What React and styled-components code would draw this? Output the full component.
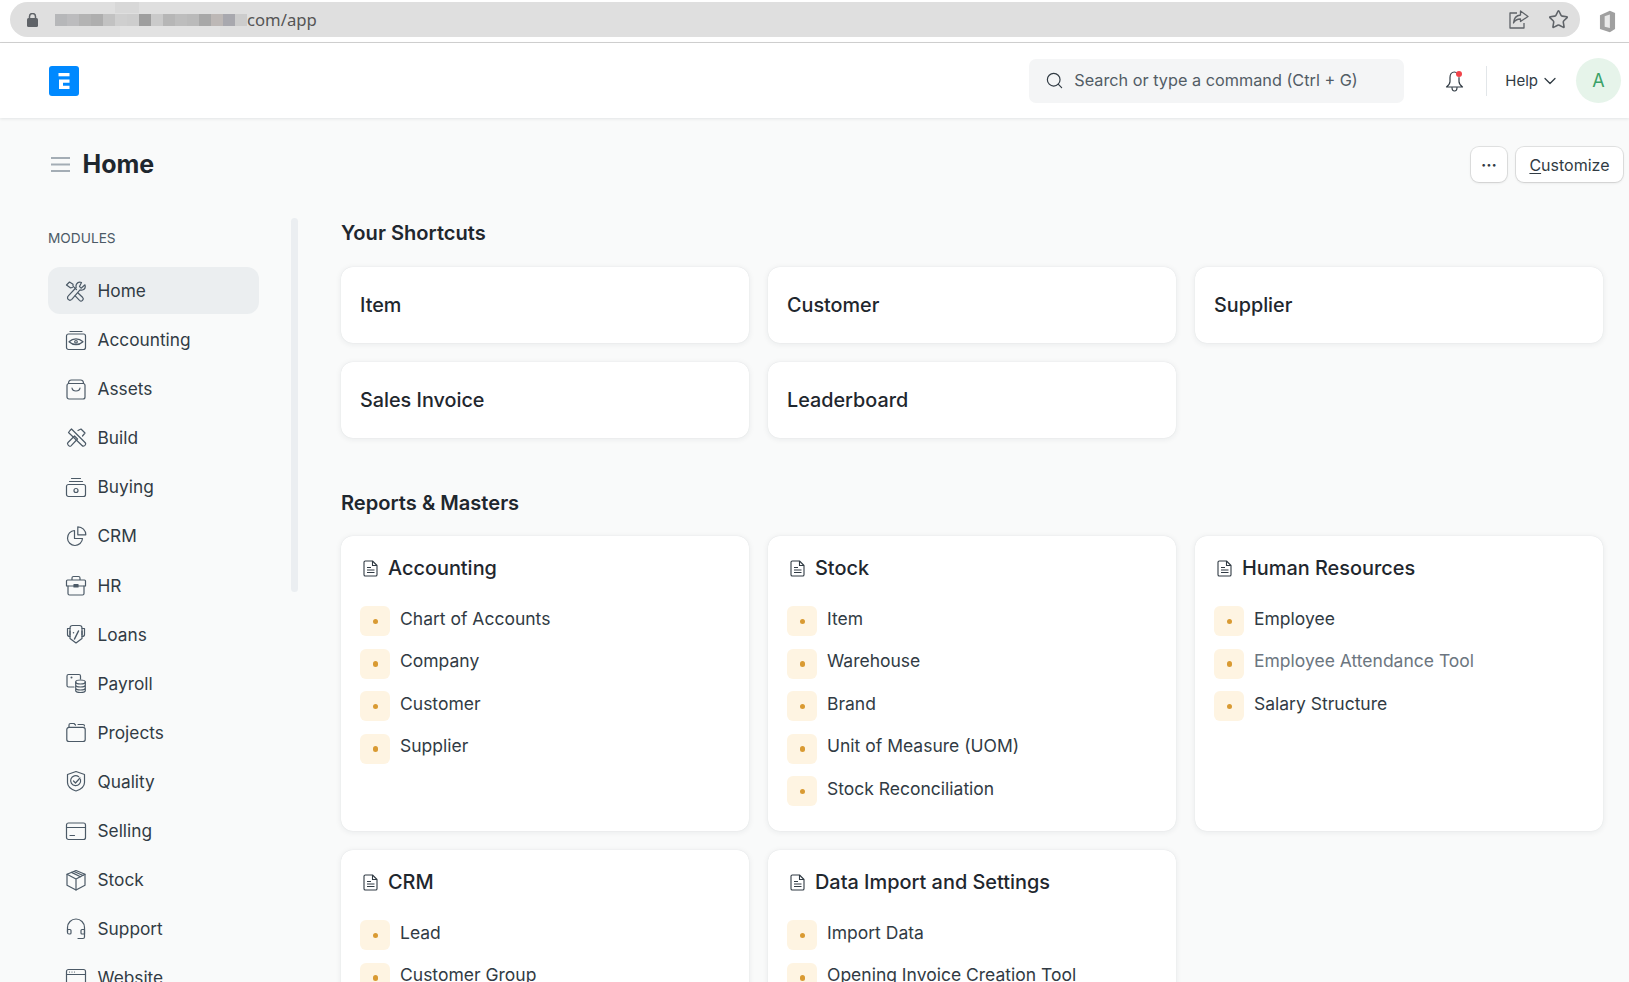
import React from 'react';
import styled, { createGlobalStyle } from 'styled-components';
import { ChevronDown, Search, Star } from 'lucide-react';

const GlobalStyle = createGlobalStyle`
  html, body {
    margin: 0;
    padding: 0;
    height: 982px;
    overflow: hidden;
    background: #f9fafa;
  }
  * {
    box-sizing: border-box;
  }
`;

const Page = styled.div`
  height: 982px;
  overflow: hidden;
  font-family: Inter, "Liberation Sans", sans-serif;
  color: #1f272e;
`;

// browser chrome
const BrowserBar = styled.div`
  height: 43px;
  background: #fff;
  border-bottom: 1px solid #d2d2d2;
  padding: 2px 13px 0 10px;
  display: flex;
  align-items: flex-start;
`;

const UrlPill = styled.div`
  position: relative;
  flex: 1;
  height: 35px;
  background: #dfdfdf;
  border-radius: 18px;
  display: flex;
  align-items: center;
  padding: 0 11px 0 17px;
  margin-right: 19px;
`;

const Mosaic = styled.div`
  display: flex;
  margin-left: 17px;
`;

const MosaicCell = styled.span`
  width: 12px;
  height: 12px;
  background: ${(p) => p.$shade};
`;

const Smudge = styled.span`
  position: absolute;
  left: ${(p) => p.$left}px;
  top: ${(p) => p.$top}px;
  width: ${(p) => p.$width}px;
  height: ${(p) => p.$height}px;
  background: ${(p) => p.$shade};
`;

const UrlText = styled.span`
  font-family: "Noto Sans", "Open Sans", sans-serif;
  font-size: 16.7px;
  color: #555;
  margin-bottom: 1px;
`;

const PillActions = styled.div`
  margin-left: auto;
  display: flex;
  align-items: center;
  gap: 19px;
  color: #5f6368;
`;

// navbar
const Navbar = styled.header`
  height: 75px;
  background: #fff;
  box-shadow: 0 1px 3px rgba(25, 39, 52, 0.1);
  display: flex;
  align-items: center;
  padding: 0 8px 0 49px;
  position: relative;
`;

const SearchBox = styled.div`
  width: 375px;
  height: 44px;
  margin-left: auto;
  background: #f4f5f6;
  border-radius: 7px;
  display: flex;
  align-items: center;
  padding-left: 16px;
  gap: 10px;
  color: #525c65;
  font-size: 16.25px;
  span {
    margin-bottom: 2px;
  }
`;

const BellWrap = styled.div`
  margin-left: 40px;
  width: 21px;
  height: 22px;
  position: relative;
`;

const BellDot = styled.span`
  position: absolute;
  top: 1px;
  right: 3px;
  width: 6px;
  height: 6px;
  border-radius: 50%;
  background: #f1434a;
`;

const NavDivider = styled.div`
  width: 1px;
  height: 30px;
  background: #e2e6e9;
  margin: 0 18px 0 21px;
`;

const HelpButton = styled.div`
  display: flex;
  align-items: center;
  gap: 2px;
  font-size: 15px;
  color: #313b44;
`;

const Avatar = styled.div`
  width: 45px;
  height: 45px;
  margin-left: 16px;
  border-radius: 50%;
  background: #e6f4ea;
  color: #3aa168;
  display: flex;
  align-items: center;
  justify-content: center;
  font-size: 18px;
`;

// page head
const PageHead = styled.div`
  height: 92px;
  display: flex;
  align-items: center;
  padding: 0 6px 0 51px;
`;

const PageTitle = styled.h1`
  margin: 0 0 0 12.5px;
  font-size: 25px;
  font-weight: 700;
  color: #1f272e;
`;

const HeadActions = styled.div`
  margin-left: auto;
  display: flex;
  gap: 9px;
`;

const HeadButton = styled.button`
  height: 35px;
  padding: ${(p) => (p.$square ? '2px 0 0' : '2px 13.5px 0')};
  width: ${(p) => (p.$square ? '36px' : 'auto')};
  background: #fff;
  border: 0;
  border-radius: 8px;
  box-shadow: 0 0 0 1px rgba(0, 0, 0, 0.09), 0 1px 3px rgba(0, 0, 0, 0.1);
  font-family: inherit;
  font-size: 16px;
  font-weight: ${(p) => (p.$square ? 700 : 400)};
  color: #313b44;
  u {
    text-underline-offset: 2px;
  }
`;

// body
const Body = styled.div`
  display: flex;
  align-items: flex-start;
  padding: 8px 0 0 48px;
`;

const Sidebar = styled.nav`
  width: 211px;
  flex-shrink: 0;
`;

const SideLabel = styled.div`
  padding-top: 10px;
  height: 49px;
  line-height: 20px;
  font-size: 13.7px;
  color: #4c5a67;
`;

const SideList = styled.div`
  display: flex;
  flex-direction: column;
  gap: 2.1px;
`;

const SideItem = styled.div`
  height: 47px;
  display: flex;
  align-items: center;
  gap: 10.5px;
  padding-left: 17px;
  border-radius: 12px;
  font-size: 17.3px;
  color: #313b44;
  background: ${(p) => (p.$active ? '#ebeef0' : 'transparent')};
`;

const ScrollThumb = styled.div`
  width: 7px;
  height: 374px;
  margin: 0 43px 0 32px;
  flex-shrink: 0;
  border-radius: 4px;
  background: #ebeef1;
`;

const Main = styled.main`
  width: 1262px;
  flex-shrink: 0;
`;

const SectionTitle = styled.h2`
  margin: ${(p) => (p.$first ? '0 0 19px' : '50px 0 18px')};
  height: 30px;
  line-height: 30px;
  font-size: 20.1px;
  font-weight: 600;
  color: #1f272e;
`;

const CardGrid = styled.div`
  display: grid;
  grid-template-columns: repeat(3, 408px);
  gap: 19px;
`;

const ShortcutCard = styled.div`
  height: 76px;
  background: #fff;
  border-radius: 12px;
  box-shadow: 0 0 1px rgba(25, 39, 52, 0.12), 0 1px 6px rgba(25, 39, 52, 0.08);
  display: flex;
  align-items: center;
  padding: 0 0 1px 19px;
  font-size: 19.8px;
  font-weight: 500;
  color: #1f272e;
`;

const LinkCard = styled.div`
  background: #fff;
  border-radius: 12px;
  box-shadow: 0 0 1px rgba(25, 39, 52, 0.12), 0 1px 6px rgba(25, 39, 52, 0.08);
  padding: 20px 19px 25px;
`;

const CardTitle = styled.div`
  height: 24px;
  line-height: 24px;
  margin-bottom: 26px;
  display: flex;
  align-items: center;
  gap: 10px;
  padding-left: 3px;
  font-size: 19.9px;
  font-weight: 500;
`;

const LinkList = styled.div`
  display: flex;
  flex-direction: column;
  gap: 12.5px;
`;

const LinkRow = styled.div`
  height: 30px;
  display: flex;
  align-items: center;
  gap: 10px;
`;

const DotBox = styled.span`
  width: 30px;
  height: 30px;
  border-radius: 6px;
  background: #fef4e2;
  display: flex;
  align-items: center;
  justify-content: center;
  &::after {
    content: '';
    width: 5.500px;
    height: 5.500px;
    border-radius: 50%;
    background: #d99a32;
    margin-left: 1px;
    margin-top: 1px;
  }
`;

const LinkLabel = styled.span`
  font-size: 17.5px;
  margin-bottom: 6px;
  color: ${(p) => (p.$muted ? '#6c7680' : '#313b44')};
`;

// icons, all on a 22 grid
const Svg = ({ size = 22, children }) => (
  <svg width={size} height={size} viewBox="0 0 22 22" fill="none" stroke="#4c5a67" strokeWidth="1.2" strokeLinecap="round" strokeLinejoin="round">
    {children}
  </svg>
);

const sideIcons = {
  Home: (
    <>
      <path d="M14.500 6.600l1.600 1.600 3.900-3.400c.6 2.100-.1 4.100-1.900 5-1 .5-2.100.4-3.100.1L6.800 19.300c-1 1-2.700 1-3.600.1s-.9-2.600.1-3.600l7.900-8.300c-.4-1.200-.3-2.400.3-3.400 1-1.600 3-2.300 5-1.600z" />
      <path d="M1.500 5l3-3 3.500 2.200v2l3.500 3.500M13 13l4.500 4.300c.8.8.8 2.200 0 3s-2.200.8-3 0l-4.300-4.500M7.500 7.500l-2.200.3L1.500 5" />
    </>
  ),
  Accounting: (
    <>
      <path d="M5 2.500h12" />
      <rect x="1.500" y="5" width="19" height="15.500" rx="2" />
      <path d="M4 12.800c4-3.800 10-3.800 14 0-4 3.800-10 3.800-14 0z" />
      <circle cx="11" cy="12.800" r="1.300" />
    </>
  ),
  Assets: (
    <>
      <rect x="2" y="5.500" width="18" height="15.500" rx="2" />
      <path d="M3.500 5.500c0-2 1-3.500 3-3.500h9c2 0 3 1.500 3 3.500" />
      <path d="M7 10c.5 4 7.500 4 8 0" />
    </>
  ),
  Build: (
    <>
      <path d="M3 15.500l6.500-6.500 3 3-6.500 6.800c-.6.600-1.400.600-2 0l-1-1c-.6-.6-.6-1.600 0-2.300z" />
      <path d="M5 3.500l1.500-1.500 13.500 13.500c.8.800.8 1.800.1 2.600l-.5.500c-.8.700-1.800.7-2.600-.1L3.500 5.500l1.500-2z" />
      <path d="M13 3.500l3-1.500 4 4-2.500 3" />
    </>
  ),
  Buying: (
    <>
      <path d="M6.500 2.500h9M4.500 5.500h13" />
      <rect x="1.500" y="8.500" width="19" height="12" rx="2" />
      <circle cx="11" cy="14.500" r="2" />
    </>
  ),
  CRM: (
    <>
      <path d="M9.500 5.500a7.500 7.500 0 1 0 8 8h-8z" />
      <path d="M12.800 1.800v8h8a8 8 0 0 0-8-8z" />
    </>
  ),
  HR: (
    <>
      <path d="M3 12v7.500c0 1 .5 1.500 1.500 1.500h13c1 0 1.500-.5 1.500-1.500V12" />
      <path d="M1.500 7c0-.7.300-1 1-1h17c.7 0 1 .3 1 1v5h-19zM7 5.500V4C7 3 7.500 2.500 8.500 2.500h5c1 0 1.500.5 1.500 1.500v1.500" />
      <path d="M9 10.500h4v2.500h-4z" fill="#4c5a67" />
    </>
  ),
  Loans: (
    <>
      <path d="M5 12V5c0-1.500 1-2.500 2.500-2.500h7C16 2.500 17 3.500 17 5v7" />
      <path d="M5 5.500H2.500v6c0 1.500 1 2 2.500 2M17 5.500h2.500v6c0 1.500-1 2-2.500 2" />
      <path d="M5 8v7.500L11 20l6-4.500V8" />
      <path d="M13.500 8l-4 8M8.500 9.800h.01" strokeWidth="1.500" />
    </>
  ),
  Payroll: (
    <>
      <path d="M9 15H3.500C2.500 15 2 14.500 2 13.500V4c0-1 .5-1.500 1.500-1.500H14c1 0 1.500.5 1.500 1.500v3" />
      <path d="M6.500 5.500h.01" strokeWidth="2" />
      <ellipse cx="15.500" cy="10" rx="4.800" ry="2" />
      <path d="M10.700 10v8.500c0 1 2 2 4.800 2s4.800-1 4.800-2V10M10.700 13c0 1.100 2 2 4.800 2s4.800-.9 4.800-2M10.700 16c0 1.100 2 2 4.800 2s4.800-.9 4.800-2" />
    </>
  ),
  Projects: (
    <>
      <path d="M4 6.500V4c0-1 .5-1.500 1.500-1.500H9l1.500 1.500" />
      <path d="M13 3.500h5c1 0 1.500.5 1.500 1.500" />
      <path d="M1.800 8.500c0-1.500 1-2.200 2.200-2.200h14c1.300 0 2.200.7 2.200 2.200v10c0 1.500-.9 2-2.200 2H4c-1.300 0-2.200-.5-2.200-2z" />
    </>
  ),
  Quality: (
    <>
      <path d="M11 1.500l8.500 3v8c0 4-4 7-8.500 8.500-4.500-1.500-8.500-4.500-8.500-8.500v-8z" />
      <path d="M15.500 9.500a5 5 0 1 1-1.800-2.800" />
      <path d="M8.500 11l2 2 4.500-5" />
    </>
  ),
  Selling: (
    <>
      <rect x="1.500" y="3" width="19" height="16.500" rx="2" />
      <path d="M1.500 7.500h19M5 15.500h4.500" />
    </>
  ),
  Stock: (
    <>
      <path d="M11 1.500l9 3.800v11L11 21l-9-4.700v-11z" />
      <path d="M2 5.300L11 10l9-4.700M11 10v11" />
      <path d="M6.500 3.400l9 4.300M9 2.500l9 4" />
    </>
  ),
  Support: (
    <>
      <path d="M2.500 14V9.500a8.500 8.500 0 0 1 17 0V14" />
      <path d="M2.500 11.500H5c.7 0 1 .3 1 1V15c0 .7-.3 1-1 1H4c-1 0-1.500-.5-1.500-1.500zM19.500 11.500H17c-.7 0-1 .3-1 1V15c0 .7.3 1 1 1h2.500z" />
      <path d="M19.500 14v5c0 1-.5 1.500-1.500 1.500h-5" />
    </>
  ),
  Website: (
    <>
      <rect x="1.500" y="2.500" width="19" height="17" rx="2" />
      <path d="M1.500 7.500h19M4.500 5h.01M7 5h.01M9.500 5h.01" />
    </>
  ),
};

const DocIcon = () => (
  <svg width="15" height="17" viewBox="0 0 15 17" fill="none" stroke="#313b44" strokeWidth="1.1" strokeLinejoin="round">
    <path d="M1 2.300C1 1.500 1.500 1 2.300 1H9.500L14 5.500v9.200c0 .8-.5 1.300-1.300 1.300H2.300c-.8 0-1.300-.5-1.300-1.300z" />
    <path d="M9.500 1v4.500H14M4 7.500h4M4 10h7.500M4 12.500h7.500" />
  </svg>
);

const Logo = () => (
  <svg width="30" height="30" viewBox="0 0 30 30">
    <rect width="30" height="30" rx="3" fill="#0089ff" />
    <path d="M9.500 7h11v3.300h-11z" fill="#fff" />
    <path d="M10 13.500h10.500v3.200H14v3.100h6.500V23H10z" fill="#fff" />
  </svg>
);

const mosaic = ['#b6b7b9', '#bcbcbe', '#b3b3b3', '#aeaeae', '#c2c2c2', '#cfcfcf', '#cdcdcd', '#9e9e9e', '#cacaca', '#b6b6b6', '#bdbdbd', '#bababa', '#a8a8a8', '#bdb8b6', '#a8a8ae', '#cccccc'];

const modules = ['Home', 'Accounting', 'Assets', 'Build', 'Buying', 'CRM', 'HR', 'Loans', 'Payroll', 'Projects', 'Quality', 'Selling', 'Stock', 'Support', 'Website'];

const shortcuts = ['Item', 'Customer', 'Supplier', 'Sales Invoice', 'Leaderboard'];

const reports = [
  { title: 'Accounting', links: ['Chart of Accounts', 'Company', 'Customer', 'Supplier'] },
  { title: 'Stock', links: ['Item', 'Warehouse', 'Brand', 'Unit of Measure (UOM)', 'Stock Reconciliation'] },
  { title: 'Human Resources', links: ['Employee', 'Employee Attendance Tool', 'Salary Structure'] },
  { title: 'CRM', links: ['Lead', 'Customer Group'] },
  { title: 'Data Import and Settings', links: ['Import Data', 'Opening Invoice Creation Tool'] },
];

const App = () => {
  return (
    <Page>
      <GlobalStyle />
      <BrowserBar>
        <UrlPill>
          <svg width="11" height="14" viewBox="0 0 11 14">
            <path d="M2.500 5V3.500a3 3 0 0 1 6 0V5" fill="none" stroke="#5f6368" strokeWidth="1.500" />
            <rect y="5" width="11" height="9" rx="1.500" fill="#5f6368" />
          </svg>
          <Mosaic>
            {mosaic.map((shade, i) => <MosaicCell key={i} $shade={shade} />)}
          </Mosaic>
          <Smudge $left={105} $top={0} $width={24} $height={11} $shade="#d8d8d8" />
          <Smudge $left={110} $top={24} $width={100} $height={11} $shade="#e2e2e2" />
          <UrlText>com/app</UrlText>
          <PillActions>
            <svg width="20" height="19" viewBox="0 0 20 19" fill="none" stroke="#5f6368" strokeWidth="1.300" strokeLinejoin="round">
              <path d="M8 3H1v15h14v-5" />
              <path d="M11.500 1l7.500 5.500-7.500 5V9c-3.500 0-5.500 1-7 4 .3-4.500 3-7.500 7-8z" />
            </svg>
            <Star size={21} strokeWidth={1.800} color="#5f6368" />
          </PillActions>
        </UrlPill>
        <svg width="17" height="23" viewBox="0 0 18 23" style={{ marginTop: 8 }}>
          <path d="M11.500 0L17 2.500v17L11.500 23 1 19.500V5z" fill="#a0a0a0" />
          <path d="M11.500 4L6 6v11l5.500 1.500z" fill="#e9e9e9" />
        </svg>
      </BrowserBar>

      <Navbar>
        <Logo />
        <SearchBox>
          <Search size={19} strokeWidth={1.500} color="#313b44" />
          <span>Search or type a command (Ctrl + G)</span>
        </SearchBox>
        <BellWrap>
          <svg width="21" height="22" viewBox="0 0 21 22" fill="none" stroke="#313b44" strokeWidth="1.200" strokeLinecap="round" strokeLinejoin="round">
            <path d="M13 3.500C12.300 2.500 11.500 2 10.500 2 7.500 2 6 4.500 6 7.500v4c0 2.500-1.500 4-3.500 5.500h16c-2-1.500-3.500-3-3.500-5.500V7.500" />
            <path d="M8 17.500c0 2.500 1 3.500 2.500 3.500s2.500-1 2.500-3.500" />
          </svg>
          <BellDot />
        </BellWrap>
        <NavDivider />
        <HelpButton>
          Help
          <ChevronDown size={20} strokeWidth={1.500} />
        </HelpButton>
        <Avatar>A</Avatar>
      </Navbar>

      <PageHead>
        <svg width="19" height="15" viewBox="0 0 19 15" stroke="#a4adb5" strokeWidth="1.800">
          <path d="M0 1h19M0 7.500h19M0 14h19" />
        </svg>
        <PageTitle>Home</PageTitle>
        <HeadActions>
          <HeadButton $square>···</HeadButton>
          <HeadButton><u>C</u>ustomize</HeadButton>
        </HeadActions>
      </PageHead>

      <Body>
        <Sidebar>
          <SideLabel>MODULES</SideLabel>
          <SideList>
            {modules.map((name) => (
              <SideItem key={name} $active={name === 'Home'}>
                <Svg>{sideIcons[name]}</Svg>
                {name}
              </SideItem>
            ))}
          </SideList>
        </Sidebar>
        <ScrollThumb />
        <Main>
          <SectionTitle $first>Your Shortcuts</SectionTitle>
          <CardGrid>
            {shortcuts.map((name) => <ShortcutCard key={name}>{name}</ShortcutCard>)}
          </CardGrid>
          <SectionTitle>Reports &amp; Masters</SectionTitle>
          <CardGrid>
            {reports.map((group) => (
              <LinkCard key={group.title}>
                <CardTitle>
                  <DocIcon />
                  {group.title}
                </CardTitle>
                <LinkList>
                  {group.links.map((link) => (
                    <LinkRow key={link}>
                      <DotBox />
                      <LinkLabel $muted={link === 'Employee Attendance Tool'}>{link}</LinkLabel>
                    </LinkRow>
                  ))}
                </LinkList>
              </LinkCard>
            ))}
          </CardGrid>
        </Main>
      </Body>
    </Page>
  );
};

export default App;
